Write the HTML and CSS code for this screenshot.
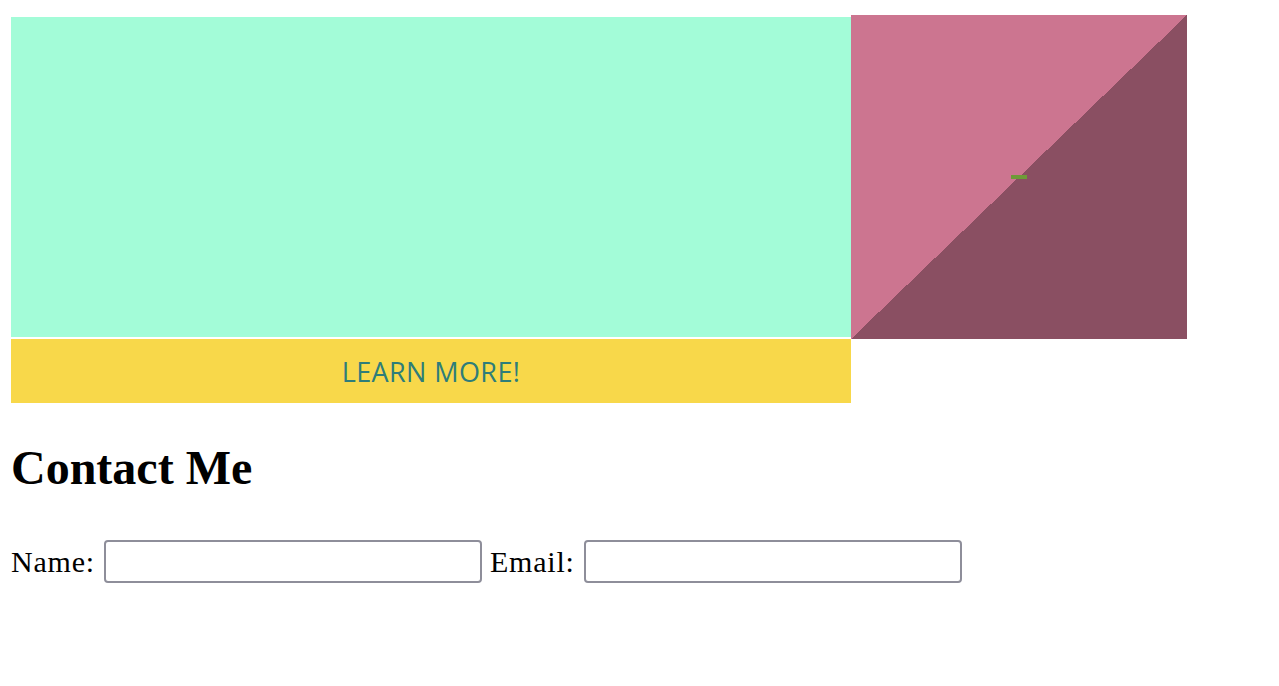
FILE: index.html
```html
<!DOCTYPE html>
<html>
<head>
<meta charset="utf-8">
<link rel="stylesheet" href="styles.css">
</head>
<body>
<div class="page">
  <section class="hero">
    <div class="hero-main">
      <div class="panel"></div>
      <a class="cta" href="#">LEARN MORE!</a>
    </div>
    <div class="square"><span class="dash"></span></div>
  </section>
  <h1 class="title">Contact Me</h1>
  <form class="contact">
    <label class="field"><span class="label-text">Name:</span><input class="input" type="text"></label>
    <label class="field"><span class="label-text">Email:</span><input class="input" type="email"></label>
  </form>
</div>
</body>
</html>
```
FILE: styles.css
```css
html, body {
  margin: 0;
  padding: 0;
  background: #ffffff;
}
.page {
  padding: 15px 11px 0 11px;
  font-family: "Liberation Serif", "Times New Roman", serif;
  font-size: 24px;
  color: #000;
}
.hero {
  display: flex;
  align-items: flex-start;
}
.hero-main {
  width: 840px;
  display: flex;
  flex-direction: column;
  gap: 2px;
  margin-top: 2px;
}
.panel {
  height: 320px;
  background: #a3fcd8;
}
.cta {
  height: 64px;
  display: flex;
  align-items: center;
  justify-content: center;
  background: #f8d84a;
  color: #2e7d7a;
  font-family: "Open Sans", "Noto Sans", sans-serif;
  font-size: 27px;
  font-weight: 500;
  text-decoration: none;
  letter-spacing: 0.4px;
}
.square {
  position: relative;
  width: 336px;
  height: 324px;
  background: linear-gradient(to top left, #8a4f62 50%, #cc7590 50%);
}
.dash {
  position: absolute;
  left: 160px;
  top: 160px;
  width: 16px;
  height: 4px;
  background: #6e9a38;
}
.title {
  font-size: 48px;
  font-weight: bold;
  margin: 37px 0 0 0;
  line-height: 55px;
}
.contact {
  margin-top: 45px;
  display: flex;
  align-items: center;
  gap: 8px;
}
.field {
  display: flex;
  align-items: center;
  gap: 9px;
}
.label-text {
  font-size: 30px;
  line-height: 36px;
  letter-spacing: 0.8px;
}
.input {
  width: 378px;
  height: 43px;
  box-sizing: border-box;
  border: 2px solid #8e8e9a;
  border-radius: 4px;
  background: #fff;
  font-size: 24px;
  margin: 0;
}
```
